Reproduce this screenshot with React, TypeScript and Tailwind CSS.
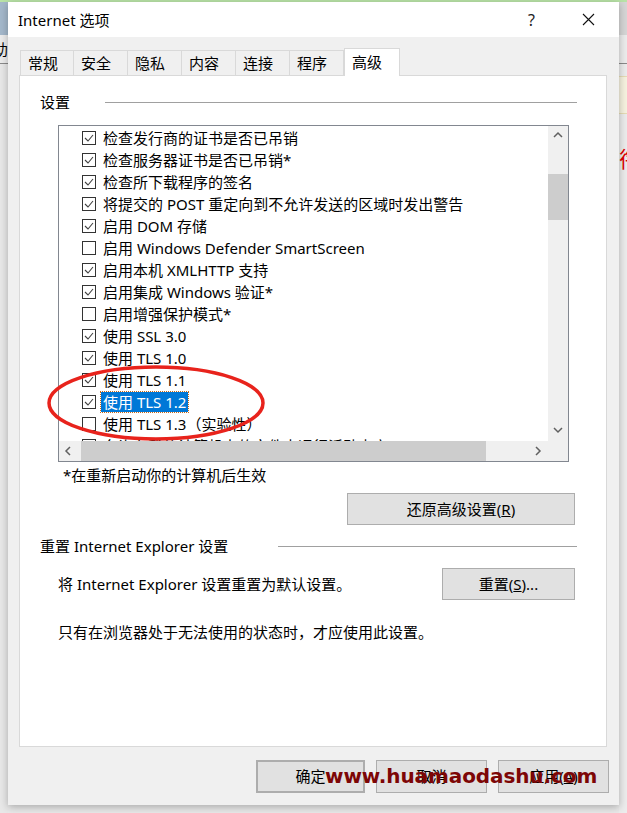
import React from "react";

const items = [
  { label: "检查发行商的证书是否已吊销", checked: true },
  { label: "检查服务器证书是否已吊销*", checked: true },
  { label: "检查所下载程序的签名", checked: true },
  { label: "将提交的 POST 重定向到不允许发送的区域时发出警告", checked: true },
  { label: "启用 DOM 存储", checked: true },
  { label: "启用 Windows Defender SmartScreen", checked: false },
  { label: "启用本机 XMLHTTP 支持", checked: true },
  { label: "启用集成 Windows 验证*", checked: true },
  { label: "启用增强保护模式*", checked: false },
  { label: "使用 SSL 3.0", checked: true },
  { label: "使用 TLS 1.0", checked: true },
  { label: "使用 TLS 1.1", checked: true },
  { label: "使用 TLS 1.2", checked: true, selected: true },
  { label: "使用 TLS 1.3（实验性）", checked: false },
  { label: "允许在我的计算机上的文件中运行活动内容*", checked: false },
];

const tabs = ["常规", "安全", "隐私", "内容", "连接", "程序"];

function Chevron({ dir }: { dir: "up" | "down" | "left" | "right" }) {
  const pts = {
    up: "1,6 5,2 9,6",
    down: "1,2 5,6 9,2",
    left: "6,1 2,5 6,9",
    right: "3,1 7,5 3,9",
  }[dir];
  return (
    <svg width="10" height="10" viewBox="0 0 10 10">
      <polyline points={pts} fill="none" stroke="#606060" strokeWidth="1.5" />
    </svg>
  );
}

function CheckBox({ checked }: { checked: boolean }) {
  return (
    <div className="w-[14px] h-[14px] border border-[#333333] bg-white flex items-center justify-center shrink-0">
      {checked && (
        <svg width="12" height="12" viewBox="0 0 12 12">
          <polyline points="2,6 5,9 10,3" fill="none" stroke="#404040" strokeWidth="1.1" />
        </svg>
      )}
    </div>
  );
}

function WinButton({ children, className = "" }: { children: React.ReactNode; className?: string }) {
  return (
    <div className={`bg-[#e1e1e1] border border-[#adadad] flex items-center justify-center text-[15px] text-black ${className}`}>
      {children}
    </div>
  );
}

export default function App() {
  return (
    <div className="relative w-[627px] h-[813px] overflow-hidden bg-[#e9e9e9] flex flex-col font-['Noto_Sans','Noto_Sans_CJK_SC',sans-serif] text-black">
      <div className="h-[2px] bg-[#b9e3a7] shrink-0" />
      <div className="flex flex-1">
        {/* left background strip */}
        <div className="w-[8px] flex flex-col overflow-hidden">
          <div className="h-[33px] bg-[#a4b8cb]" />
          <div className="h-[28px] bg-[#ececec] flex items-center">
            <span className="-ml-[7px] text-[15px] leading-none">助</span>
          </div>
          <div className="h-[1px] bg-[#8a8a8a]" />
          <div className="flex-1 bg-[#e8e8e8]" />
        </div>

        {/* dialog */}
        <div className="w-[611px] h-[803px] flex flex-col shadow-[0_2px_8px_rgba(0,0,0,0.28)] z-10">
          <div className="h-[35px] bg-white flex items-center pl-[10px] pr-[24px] shrink-0">
            <span className="text-[15px] leading-[20px]">Internet 选项</span>
            <span className="ml-auto text-[16px] leading-[20px] text-[#222] mr-[47px]">?</span>
            <svg width="13" height="13" viewBox="0 0 13 13">
              <path d="M1 1 L12 12 M12 1 L1 12" stroke="#111" strokeWidth="1.1" />
            </svg>
          </div>

          <div className="flex-1 bg-[#f0f0f0] pl-[11px] pr-[12px] flex flex-col">
            {/* tabs */}
            <div className="h-[27px] mt-[11px] flex items-end ml-[1px] relative z-10">
              {tabs.map((t) => (
                <div
                  key={t}
                  className="w-[54px] h-[25px] border border-b-0 border-l-0 first:border-l border-[#d9d9d9] bg-[#f0f0f0] text-[15px] leading-[20px] pl-[7px] pt-[2px]"
                >
                  {t}
                </div>
              ))}
              <div className="w-[56px] h-[28px] -mb-px border border-b-0 border-[#d9d9d9] bg-white text-[15px] leading-[20px] pl-[7px] pt-[3px]">
                高级
              </div>
            </div>

            {/* panel */}
            <div className="h-[672px] bg-white border border-[#d9d9d9] pl-[20px] pr-[29px] pt-[16px] flex flex-col text-[15px] leading-[20px]">
              <div className="flex items-center h-[20px]">
                <span>设置</span>
                <div className="flex-1 h-px bg-[#a0a0a0] ml-[35px]" />
              </div>

              {/* listbox */}
              <div className="mt-[13px] ml-[18px] w-[511px] h-[337px] border border-[#828790] flex flex-col">
                <div className="flex h-[315px]">
                  <div className="flex-1 overflow-hidden pt-[1px] whitespace-nowrap">
                    {items.map((it) => (
                      <div key={it.label} className="h-[22px] flex items-center pl-[23px]">
                        <CheckBox checked={it.checked} />
                        {it.selected ? (
                          <span className="ml-[5px] px-[2px] h-[20px] bg-[#0078d7] text-white outline outline-1 outline-dotted outline-[#c76a1a]">
                            {it.label}
                          </span>
                        ) : (
                          <span className="ml-[7px]">{it.label}</span>
                        )}
                      </div>
                    ))}
                  </div>
                  <div className="w-[20px] bg-[#f0f0f0] flex flex-col">
                    <div className="h-[20px] flex items-center justify-center">
                      <Chevron dir="up" />
                    </div>
                    <div className="h-[28px]" />
                    <div className="h-[46px] bg-[#cdcdcd]" />
                    <div className="flex-1" />
                    <div className="h-[20px] flex items-center justify-center">
                      <Chevron dir="down" />
                    </div>
                  </div>
                </div>
                <div className="flex flex-1 bg-[#f0f0f0]">
                  <div className="w-[20px] flex items-center justify-center">
                    <Chevron dir="left" />
                  </div>
                  <div className="w-[405px] ml-[2px] bg-[#cdcdcd]" />
                  <div className="flex-1" />
                  <div className="w-[20px] flex items-center justify-center">
                    <Chevron dir="right" />
                  </div>
                  <div className="w-[20px]" />
                </div>
              </div>

              <div className="mt-[3px] ml-[23px]">*在重新启动你的计算机后生效</div>

              <WinButton className="mt-[8px] self-end mr-[2px] w-[228px] h-[32px]">
                <span>
                  还原高级设置(<span className="underline">R</span>)
                </span>
              </WinButton>

              <div className="mt-[11px] flex items-center h-[20px]">
                <span>重置 Internet Explorer 设置</span>
                <div className="flex-1 h-px bg-[#a0a0a0] ml-[50px]" />
              </div>

              <div className="mt-[12px] h-[32px] flex items-center">
                <span className="ml-[18px]">将 Internet Explorer 设置重置为默认设置。</span>
                <WinButton className="ml-auto mr-[2px] w-[133px] h-[32px]">
                  <span>
                    重置(<span className="underline">S</span>)...
                  </span>
                </WinButton>
              </div>

              <div className="mt-[22px] ml-[18px]">只有在浏览器处于无法使用的状态时，才应使用此设置。</div>
            </div>

            {/* bottom buttons */}
            <div className="mt-[13px] flex justify-end gap-[11px] -mr-[2px]">
              <WinButton className="w-[109px] h-[33px] border-2 border-[#0078d7]">确定</WinButton>
              <WinButton className="w-[111px] h-[33px]">取消</WinButton>
              <WinButton className="w-[111px] h-[33px]">
                <span>
                  应用(<span className="underline">A</span>)
                </span>
              </WinButton>
            </div>
          </div>
        </div>

        {/* right background strip */}
        <div className="flex-1 flex flex-col overflow-hidden">
          <div className="h-[33px] bg-[#d6d6d6]" />
          <div className="h-[28px] bg-[#ececec]" />
          <div className="h-[1px] bg-[#8a8a8a]" />
          <div className="h-[12px] bg-[#ececec]" />
          <div className="h-[38px] bg-[#f6f2df] border-y border-[#e6dcb4]" />
          <div className="h-[92px] bg-[#ececec] flex items-center">
            <span className="text-[22px] leading-none text-[#e00000] font-['Liberation_Serif','Noto_Sans_CJK_SC',serif]">衔</span>
          </div>
          <div className="flex-1 bg-[#ececec]" />
        </div>
      </div>

      {/* red annotation ellipse */}
      <svg className="absolute left-[45px] top-[363px] z-20" width="222" height="80" viewBox="0 0 222 80">
        <ellipse cx="111" cy="40" rx="107" ry="36" fill="none" stroke="#e8231c" strokeWidth="3.5" />
      </svg>

      {/* watermark */}
      <div className="absolute left-[325px] top-[762px] z-20 text-[20px] leading-[28px] font-bold text-[#7d0606] font-['DejaVu_Sans',sans-serif] tracking-[-0.1px]">
        www.huamaodashu.com
      </div>
    </div>
  );
}
